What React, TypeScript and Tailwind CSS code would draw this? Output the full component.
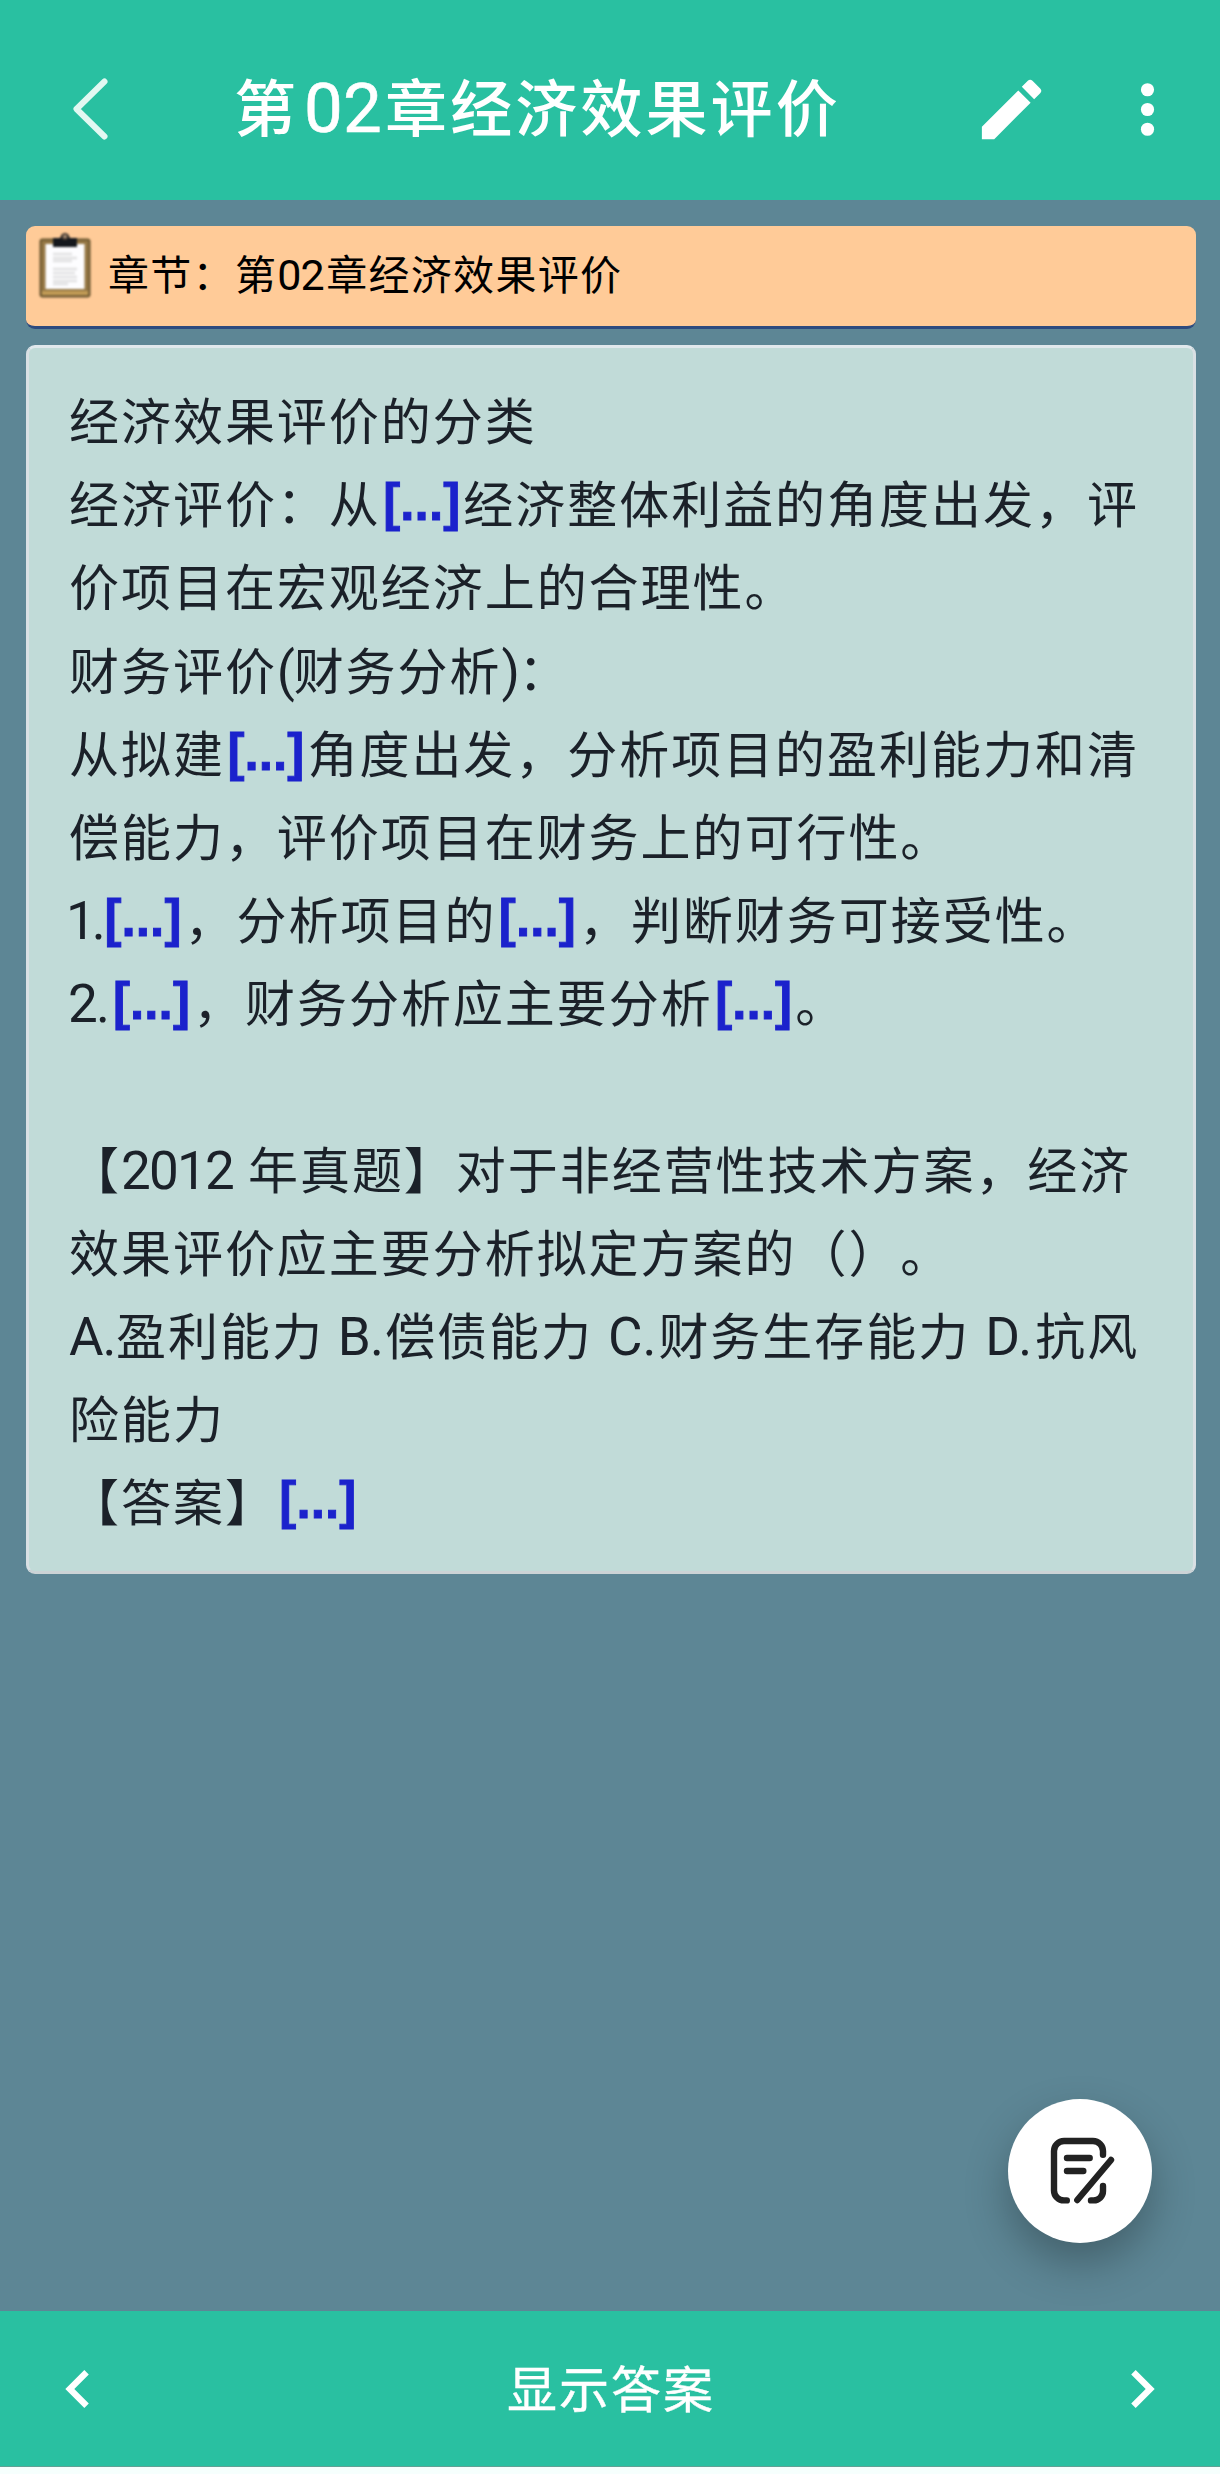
import React from "react";

const Cloze: React.FC = () => (
  <span className="inline-block w-[82.6px] pl-[2.5px] align-[3px] font-['Liberation_Sans',sans-serif] text-[51px] font-bold leading-none tracking-[0.1px] text-[#1b22cc] [-webkit-text-stroke:0.9px_#1b22cc]">[...]</span>
);

const Latin: React.FC<{ className: string; children: React.ReactNode }> = ({ className, children }) => (
  <span
    className={`inline-block whitespace-pre font-[Roboto,sans-serif] text-[53px] ${className}`}
  >
    {children}
  </span>
);

const Line: React.FC<{ children?: React.ReactNode }> = ({ children }) => (
  <p className="h-[83.2px] whitespace-nowrap leading-[83.2px]">{children}</p>
);

const ClipboardIcon: React.FC = () => (
  <svg className="mt-1 ml-[11px] h-[72px] w-[56px] shrink-0 blur-[0.8px]" viewBox="0 0 56 72">
    <rect x="2.5" y="8.5" width="51" height="59" rx="3" fill="#6b5730" />
    <rect x="4.5" y="10.5" width="47" height="55" rx="1" fill="#957744" />
    <path d="M5 61h46v4H5z" fill="#c19b55" />
    <rect x="8.5" y="14" width="39" height="45" fill="#fdfdff" />
    <path d="M16 24h19M16 28h24M16 31h19M16 39h24M16 43h22M16 47h24M16 51h24M16 54h15" stroke="#e2e2e3" strokeWidth="2.6" />
    <path d="M16 8h7l2-4h6l2 4h7v9H16z" fill="#15181d" />
    <circle cx="28" cy="6.5" r="2.8" fill="#a58a72" stroke="#40362e" strokeWidth="1.5" />
  </svg>
);

const App: React.FC = () => {
  return (
    <div className="flex h-[2474px] w-[1220px] flex-col overflow-hidden bg-[#f6fffd] font-['Noto_Sans_CJK_SC',sans-serif] [text-spacing-trim:space-all]">
      {/* Top bar */}
      <header className="flex h-[200px] shrink-0 items-center bg-[#29c0a1] pt-[18px] text-white">
        <svg className="ml-[70px] h-[64px] w-[40px] shrink-0" viewBox="0 0 40 64" fill="none">
          <path d="M34.5 4.5L6.5 32l28 27.5" stroke="#e2f8f2" strokeWidth="6" strokeLinecap="round" strokeLinejoin="round" />
        </svg>
        <h1 className="ml-[124px] w-[738px] whitespace-nowrap pb-[4px] text-[62px] font-medium leading-[90px] tracking-[3.1px]">
          第
          <span className="inline-block w-[86px] pl-[5px] font-[Roboto,sans-serif] text-[69px] font-normal tracking-[0px] [-webkit-text-stroke:0.6px_#ffffff]">02</span>
          章经济效果评价
        </h1>
        <svg className="h-[79px] w-[79px] shrink-0" viewBox="0 0 24 24" fill="currentColor">
          <path d="M3 17.25V21h3.75L17.81 9.94l-3.75-3.75L3 17.25zM20.71 7.04a1 1 0 0 0 0-1.41l-2.34-2.34a1 1 0 0 0-1.41 0l-1.83 1.83 3.75 3.75 1.83-1.83z" />
        </svg>
        <svg className="ml-[57px] h-[79px] w-[79px] shrink-0" viewBox="0 0 24 24" fill="currentColor">
          <circle cx="12" cy="6" r="2" />
          <circle cx="12" cy="12" r="2" />
          <circle cx="12" cy="18" r="2" />
        </svg>
      </header>

      <main className="relative flex h-[2111px] shrink-0 flex-col bg-[#5d8695] pt-[26px] pr-[24px] pl-[26px]">
        {/* Chapter */}
        <div className="flex h-[103px] shrink-0 rounded-[9px] border-b-[3px] border-[#2d4b7f] bg-[#ffcb98] text-black">
          <ClipboardIcon />
          <div className="ml-[15px] whitespace-nowrap pt-[16px] text-[41px] leading-[60px] tracking-[1.3px]">
            章节：第
            <span className="inline-block w-[49px] font-[Roboto,sans-serif] text-[43px] tracking-[-0.8px]">02</span>
            章经济效果评价
          </div>
        </div>

        {/* Question card */}
        <article className="mt-4 h-[1229px] shrink-0 rounded-[9px] border-[3px] border-[#d9e0e4] border-t-[#e0e8ec] border-b-[#ccd3d6] bg-[#c1dbd8] pt-[29px] pl-[40px] text-[50px] tracking-[1.96px] text-[#1b2129]">
          <Line>经济效果评价的分类</Line>
          <Line>经济评价：从<Cloze />经济整体利益的角度出发，评</Line>
          <Line>价项目在宏观经济上的合理性。</Line>
          <Line>
            财务评价<Latin className="w-[16.8px]">(</Latin>财务分析<Latin className="w-[16.8px]">)</Latin>：
          </Line>
          <Line>从拟建<Cloze />角度出发，分析项目的盈利能力和清</Line>
          <Line>偿能力，评价项目在财务上的可行性。</Line>
          <Line>
            <Latin className="-ml-[3px] w-[36px] tracking-[-4px]">1.</Latin><Cloze />，分析项目的<Cloze />，判断财务可接受性。
          </Line>
          <Line>
            <Latin className="-ml-[1px] w-[42.5px] tracking-[-1.8px]">2.</Latin><Cloze />，财务分析应主要分析<Cloze />。
          </Line>
          <Line />
          <Line>
            【<Latin className="w-[127px] tracking-[-1.8px]">2012 </Latin>年真题】对于非经营性技术方案，经济
          </Line>
          <Line>效果评价应主要分析拟定方案的（）。</Line>
          <Line>
            <Latin className="w-[47px] tracking-[-1px]">A.</Latin>盈利能力<Latin className="w-[61.3px] pl-[14px] tracking-[-0.8px]">B.</Latin>偿债能力
            <Latin className="w-[65.4px] pl-[15px] tracking-[0px]">C.</Latin>财务生存能力<Latin className="w-[65.1px] pl-[15px] tracking-[1px]">D.</Latin>抗风
          </Line>
          <Line>险能力</Line>
          <Line>【答案】<Cloze /></Line>
        </article>

        {/* Floating note button */}
        <button className="absolute top-[1899px] left-[1008px] z-10 h-[144px] w-[144px] rounded-full bg-white shadow-[0_20px_44px_rgba(0,0,0,0.28)]">
          <svg
            className="h-[144px] w-[144px]"
            viewBox="0 0 144 144"
            fill="none"
            stroke="#222222"
            strokeWidth="6.4"
            strokeLinecap="round"
            strokeLinejoin="round"
          >
            <path d="M58.8 101.4H56a10 10 0 0 1-10-10V52a10 10 0 0 1 10-10h29a10 10 0 0 1 10 10v3.8M95 87v5a9.4 9.4 0 0 1-9.4 9.4H83" />
            <path d="M59 59h22.7M59 72h16.3M103 61L69.3 101" />
          </svg>
        </button>
      </main>

      {/* Bottom bar */}
      <footer className="flex h-[156px] shrink-0 items-center justify-between border-b border-[#5fa295] bg-[#29c0a1] px-10 text-white">
        <svg className="h-[76px] w-[76px]" viewBox="0 0 24 24" fill="currentColor">
          <path d="M15.41 7.41L14 6l-6 6 6 6 1.41-1.41L10.83 12z" />
        </svg>
        <span className="pb-[6px] pl-[2px] text-[50px] leading-[80px] tracking-[2px] [-webkit-text-stroke:0.4px_#ffffff]">显示答案</span>
        <svg className="h-[76px] w-[76px]" viewBox="0 0 24 24" fill="currentColor">
          <path d="M10 6L8.59 7.41 13.17 12l-4.58 4.59L10 18l6-6z" />
        </svg>
      </footer>
    </div>
  );
};

export default App;
